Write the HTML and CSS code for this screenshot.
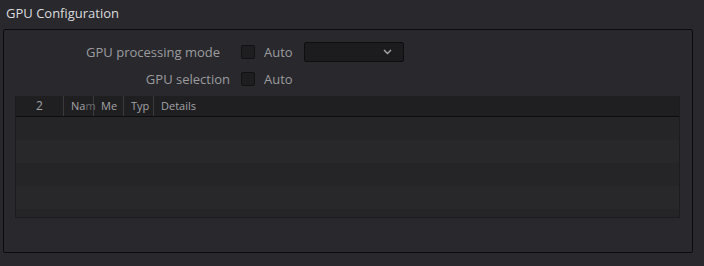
FILE: index.html
```html
<!DOCTYPE html>
<html lang="en">
<head>
    <meta charset="UTF-8">
    <title>GPU Configuration</title>
    <link rel="stylesheet" href="styles.css">
</head>
<body>
    <div class="section-title">GPU Configuration</div>
    <div class="panel">
        <div class="row row-mode">
            <span class="label label-mode">GPU processing mode</span>
            <span class="check"></span>
            <span class="check-text">Auto</span>
            <div class="combo">
                <svg class="chevron" width="9" height="6" viewBox="0 0 9 6">
                    <polyline points="1,1 4.5,4.5 8,1" fill="none" stroke="#a8a8ac" stroke-width="1.4"/>
                </svg>
            </div>
        </div>
        <div class="row">
            <span class="label">GPU selection</span>
            <span class="check"></span>
            <span class="check-text">Auto</span>
        </div>

        <div class="gpu-table">
            <div class="thead">
                <div class="th col-num">2</div>
                <div class="th col-sm">Na<span class="fade">m</span></div>
                <div class="th col-sm">Me</div>
                <div class="th col-sm">Typ</div>
                <div class="th col-details">Details</div>
            </div>
            <div class="tbody">
                <div class="tr"></div>
                <div class="tr"></div>
                <div class="tr"></div>
                <div class="tr"></div>
                <div class="tr"></div>
            </div>
        </div>
    </div>
</body>
</html>
```

FILE: styles.css
```css
body, html {
    margin: 0;
    padding: 0;
    height: 100vh;
    overflow: hidden;
    background: #28282d;
    font-family: 'Open Sans', 'Noto Sans', sans-serif;
}

.section-title {
    height: 29px;
    padding-left: 6px;
    box-sizing: border-box;
    padding-top: 4px;
    font-size: 13px;
    color: #dcdcde;
}

.panel {
    margin: 0 11px 0 3px;
    height: 224px;
    box-sizing: border-box;
    border: 1px solid #0c0c0e;
    border-radius: 2px;
    padding: 12px 12px 0 11px;
}

.row {
    display: flex;
    align-items: center;
    height: 20px;
    margin-left: -11px;
}

.row + .row {
    margin-top: 7px;
}

.label {
    width: 226px;
    text-align: right;
    font-size: 13px;
    color: #9c9c9f;
    white-space: nowrap;
    margin-right: 11px;
}

.label-mode {
    padding-right: 10px;
    box-sizing: border-box;
}

.check {
    width: 14px;
    height: 14px;
    box-sizing: border-box;
    background: #1e1e21;
    border: 1px solid #111113;
    border-radius: 2px;
}

.check-text {
    margin-left: 9px;
    font-size: 13px;
    color: #9c9c9f;
}

.combo {
    margin-left: 11px;
    width: 100px;
    height: 20px;
    box-sizing: border-box;
    background: #1c1c1f;
    border: 1px solid #0e0e10;
    border-radius: 2px;
    display: flex;
    align-items: center;
    justify-content: flex-end;
    padding-right: 11px;
}

.gpu-table {
    margin-top: 7px;
    height: 121px;
    border: 1px solid #1c1c1f;
    border-top: none;
    background: #262629;
    overflow: hidden;
}

.thead {
    display: flex;
    height: 20px;
    background: #1f1f22;
    border-bottom: 1px solid #0d0d0f;
}

.th {
    box-sizing: border-box;
    font-size: 11px;
    line-height: 20px;
    color: #a4a4a7;
    white-space: nowrap;
    padding-left: 7px;
    border-right: 1px solid #3a3a3e;
}

.fade {
    opacity: 0.55;
}

.col-num {
    width: 48px;
    padding-left: 0;
    text-align: center;
    font-size: 12px;
}

.col-sm {
    width: 30px;
}

.col-details {
    flex: 1;
    border-right: none;
}

.tr {
    height: 23px;
    background: #252528;
}

.tr:nth-child(even) {
    background: #28282b;
}
```
